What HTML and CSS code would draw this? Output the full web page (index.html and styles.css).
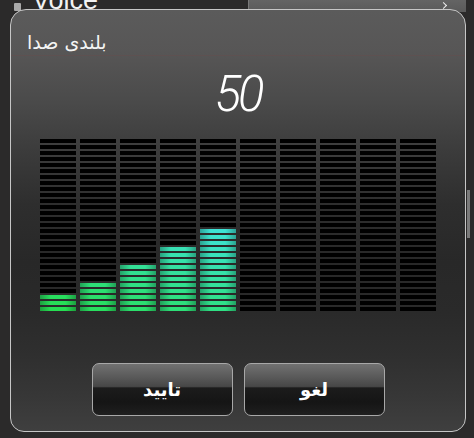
FILE: index.html
```html
<!DOCTYPE html>
<html lang="fa">
<head>
    <meta charset="UTF-8" />
    <title>بلندی صدا</title>
    <link rel="stylesheet" href="styles.css">
</head>
<body>
<div class="screen">
    <div class="under">
        <div class="under-left">
            <span class="bullet"></span>
            <span class="voice">Voice</span>
        </div>
        <div class="under-right"><span class="arrow"></span></div>
    </div>
    <div class="scroll"></div>

    <div class="dialog">
        <div class="title" dir="rtl">بلندی صدا</div>
        <div class="value">50</div>
        <div class="bars" id="bars"></div>
        <div class="buttons">
            <div class="btn" dir="rtl">تایید</div>
            <div class="btn" dir="rtl">لغو</div>
        </div>
    </div>
</div>
<script>
    var bars = document.getElementById('bars');
    var lit = [3, 5, 8, 11, 14, 0, 0, 0, 0, 0];
    var rows = 29;
    var green = [38, 222, 82];
    var cyan = [62, 226, 212];

    for (var c = 0; c < lit.length; c++) {
        var col = document.createElement('div');
        col.className = 'col';
        for (var r = 0; r < rows; r++) {
            var seg = document.createElement('span');
            seg.className = 'seg';
            if (r < lit[c]) {
                // colour goes from green at the bottom to cyan at the top
                var t = Math.min(1, (r + c * 2) / 21);
                var rgb = [];
                for (var k = 0; k < 3; k++) {
                    rgb.push(Math.round(green[k] + (cyan[k] - green[k]) * t));
                }
                seg.className = 'seg on';
                seg.style.backgroundColor = 'rgb(' + rgb.join(',') + ')';
            }
            col.appendChild(seg);
        }
        bars.appendChild(col);
    }
</script>
</body>
</html>
```

FILE: styles.css
```css
* {margin: 0; padding: 0;}
html, body {
    width: 474px;
    height: 438px;
    overflow: hidden;
    background-color: #2b2a2a;
}
.screen {
    position: relative;
    width: 474px;
    height: 438px;
}

/* the screen behind the dialog */
.under {
    display: flex;
    height: 12px;
}
.under-left {
    width: 248px;
    display: flex;
    align-items: flex-start;
    overflow: hidden;
}
.bullet {
    width: 7px;
    height: 8px;
    margin: 3px 0 0 14px;
    background-color: #a9a9a9;
    border-radius: 1px;
}
.voice {
    margin: -15px 0 0 11px;
    font-family: "Liberation Sans", sans-serif;
    font-size: 27px;
    line-height: 30px;
    color: #f2f2f2;
}
.under-right {
    flex: 1;
    margin-right: 8px;
    background: linear-gradient(#646464, #5a5a5a);
    border-left: 1px solid #7a7a7a;
    position: relative;
}
.arrow {
    position: absolute;
    right: 20px;
    top: 3px;
    width: 4px;
    height: 4px;
    border-right: 1px solid #eee;
    border-bottom: 1px solid #eee;
    transform: rotate(-45deg);
}
.scroll {
    position: absolute;
    left: 467px;
    top: 190px;
    width: 3px;
    height: 48px;
    background-color: #7a7a7a;
}

/* dialog */
.dialog {
    position: absolute;
    left: 10px;
    top: 9px;
    width: 456px;
    height: 423px;
    box-sizing: border-box;
    border: 1px solid #c6c6c6;
    border-radius: 16px 16px 14px 14px;
    background: linear-gradient(#5b5b5b 0%, #575656 10%, #4a4a4a 22%, #3b3b3b 34%, #2e2e2e 46%, #282828 60%, #2a2a2a 72%, #2f2f2f 82%, #373737 92%, #3f3f3f 100%);
    overflow: hidden;
}
.title {
    margin-top: 20px;
    padding-left: 16px;
    height: 25px;
    line-height: 25px;
    text-align: left;
    font-family: "DejaVu Sans", sans-serif;
    font-size: 19px;
    color: #f4f4f4;
    border-bottom: 1px solid rgba(120, 70, 70, 0.25);
}
.value {
    margin-top: 11px;
    height: 56px;
    line-height: 56px;
    text-align: center;
    font-family: Roboto, sans-serif;
    font-weight: 300;
    font-style: italic;
    font-size: 49px;
    letter-spacing: -3px;
    color: #fff;
}
.bars {
    display: flex;
    gap: 4px;
    margin: 16px 0 0 29px;
}
.col {
    width: 36px;
    display: flex;
    flex-direction: column-reverse;
    gap: 2px;
}
.seg {
    display: block;
    height: 4px;
    background-color: #000;
}
.seg.on {
    background-image: linear-gradient(90deg, rgba(0,0,0,0.28), rgba(0,0,0,0) 30%, rgba(0,0,0,0) 70%, rgba(0,0,0,0.28));
}
.buttons {
    display: flex;
    justify-content: center;
    gap: 11px;
    margin-top: 52px;
}
.btn {
    width: 141px;
    height: 53px;
    box-sizing: border-box;
    border: 1px solid #a8a8a8;
    border-radius: 7px;
    background: linear-gradient(#717171 0%, #5a5a5a 25%, #474747 44%, #1c1c1c 47%, #151515 75%, #1f1f1f 100%);
    text-align: center;
    line-height: 51px;
    font-family: "DejaVu Sans", sans-serif;
    font-weight: bold;
    font-size: 18px;
    color: #fff;
}
```
